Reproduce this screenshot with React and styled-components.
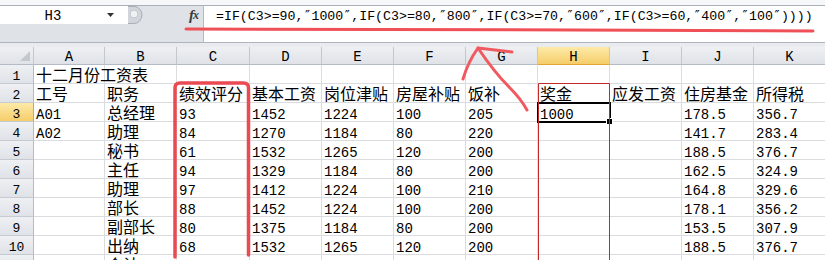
import React from "react";
import styled, { createGlobalStyle, css } from "styled-components";

const Global = createGlobalStyle`
  html, body { margin: 0; padding: 0; background: #fff; }
  body { overflow: hidden; }
`;

const MONO = `"Liberation Mono", "DejaVu Sans Mono", monospace`;
const CJK = `"Noto Sans CJK SC", "Noto Sans", sans-serif`;

const Page = styled.div`
  position: relative;
  width: 825px;
  height: 260px;
  overflow: hidden;
  background: #fff;
  font-family: ${MONO};
  color: #000;
`;

const TopStrip = styled.div`
  height: 5px;
  background: #f6f7f9;
  border-bottom: 1px solid #aab1bb;
`;

const FormulaRow = styled.div`
  display: flex;
  height: 36px;
`;

const LeftPanel = styled.div`
  width: 203px;
  background: #dfe2e7;
  display: flex;
  flex-direction: column;
`;

const NameRow = styled.div`
  height: 18px;
  display: flex;
  align-items: stretch;
`;

const NameBox = styled.div`
  width: 128px;
  background: #fff;
  display: flex;
  align-items: center;
`;

const NameText = styled.div`
  width: 106px;
  text-align: center;
  font-family: ${MONO};
  font-size: 14px;
  line-height: 16px;
  padding-top: 1px;
`;

const FxLabel = styled.div`
  flex: 1;
  display: flex;
  align-items: center;
  justify-content: flex-end;
  padding-right: 5px;
  font-family: "Liberation Serif", serif;
  font-style: italic;
  font-weight: bold;
  font-size: 15px;
  line-height: 16px;
  color: #3a3a3a;
  letter-spacing: -1px;
  & small { font-size: 12px; }
`;

const FormulaInput = styled.div`
  flex: 1;
  background: #fff;
  border-left: 1px solid #b4bac3;
  padding-left: 12px;
  font-family: ${MONO};
  font-size: 13.25px;
  line-height: 19px;
  white-space: nowrap;
  overflow: hidden;
`;

const Quote = styled.span`
  font-family: "DejaVu Sans Mono", monospace;
`;

const Divider = styled.div`
  height: 4px;
  border-top: 1px solid #aeb5bf;
  background: #e9ebee;
`;

const Sheet = styled.div`
  display: grid;
  grid-template-columns: 34px 71px 72px 73px repeat(8, 72px);
  grid-template-rows: 18px repeat(11, 19px);
`;

const headBg = css`
  background: linear-gradient(to bottom, #eef0f3, #dfe2e7);
`;
const selBg = css`
  background: linear-gradient(to bottom, #fdeaa8, #f5cd6a);
`;

const Corner = styled.div`
  ${headBg};
  border-right: 1px solid #c3c8cf;
  border-bottom: 1px solid #b5bbc4;
  box-sizing: border-box;
  display: flex;
  align-items: flex-end;
  justify-content: flex-end;
  padding: 0 3px 3px 0;
`;

const ColHead = styled.div`
  ${(p) => (p.$sel ? selBg : headBg)};
  border-right: 1px solid #c3c8cf;
  border-bottom: 1px solid ${(p) => (p.$sel ? "#e0a532" : "#b5bbc4")};
  box-sizing: border-box;
  display: flex;
  align-items: flex-end;
  justify-content: center;
  font-family: ${MONO};
  font-size: 14px;
  line-height: 11px;
  height: 18px;
  padding-bottom: 1px;
`;

const RowHead = styled.div`
  ${(p) => (p.$sel ? selBg : headBg)};
  border-right: 1px solid ${(p) => (p.$sel ? "#e0a532" : "#b5bbc4")};
  border-bottom: 1px solid #c6cbd2;
  box-sizing: border-box;
  display: flex;
  align-items: flex-end;
  justify-content: center;
  font-family: ${MONO};
  font-size: 13px;
  line-height: 11px;
  height: 19px;
  padding-bottom: 1px;
`;

const Cell = styled.div`
  border-right: 1px solid #dadcdf;
  border-bottom: 1px solid #dadcdf;
  box-sizing: border-box;
  height: 19px;
  padding-left: 2px;
  white-space: nowrap;
  display: flex;
  align-items: flex-end;
  ${(p) =>
    p.$num
      ? css`
          font-family: ${MONO};
          font-size: 14px;
          line-height: 10px;
          padding-bottom: 1px;
        `
      : css`
          font-family: ${CJK};
          font-size: 16px;
          line-height: 18px;
        `}
  ${(p) =>
    p.$active &&
    css`
      position: relative;
      z-index: 2;
      outline: 2px solid #000;
      outline-offset: -1px;
      &::after {
        content: "";
        position: absolute;
        right: -4px;
        bottom: -4px;
        width: 5px;
        height: 5px;
        background: #000;
        border: 1px solid #fff;
      }
    `}
`;

const Overlay = styled.svg`
  position: absolute;
  left: 0;
  top: 0;
  pointer-events: none;
  z-index: 5;
`;

const letters = ["A", "B", "C", "D", "E", "F", "G", "H", "I", "J", "K"];

const rows = [
  ["十二月份工资表", "", "", "", "", "", "", "", "", "", ""],
  ["工号", "职务", "绩效评分", "基本工资", "岗位津贴", "房屋补贴", "饭补", "奖金", "应发工资", "住房基金", "所得税"],
  ["A01", "总经理", "93", "1452", "1224", "100", "205", "1000", "", "178.5", "356.7"],
  ["A02", "助理", "84", "1270", "1184", "80", "220", "", "", "141.7", "283.4"],
  ["", "秘书", "61", "1532", "1265", "120", "200", "", "", "188.5", "376.7"],
  ["", "主任", "94", "1329", "1184", "80", "200", "", "", "162.5", "324.9"],
  ["", "助理", "97", "1412", "1224", "100", "210", "", "", "164.8", "329.6"],
  ["", "部长", "88", "1452", "1224", "100", "200", "", "", "178.1", "356.2"],
  ["", "副部长", "80", "1375", "1184", "80", "200", "", "", "153.5", "307.9"],
  ["", "出纳", "68", "1532", "1265", "120", "200", "", "", "188.5", "376.7"],
  ["", "会计", "", "", "", "", "", "", "", "", ""],
];

const isNum = (s) => /^[A-Za-z0-9.]*$/.test(s);

const FORMULA =
  "=IF(C3>=90,″1000″,IF(C3>=80,″800″,IF(C3>=70,″600″,IF(C3>=60,″400″,″100″))))";

const formulaParts = FORMULA.split(/(″)/).map((part, i) =>
  part === "″" ? <Quote key={i}>″</Quote> : <React.Fragment key={i}>{part}</React.Fragment>
);

export default function App() {
  return (
    <>
      <Global />
      <Page>
        <TopStrip />
        <FormulaRow>
          <LeftPanel>
            <NameRow>
              <NameBox>
                <NameText>H3</NameText>
                <svg width="10" height="6" viewBox="0 0 10 6">
                  <path d="M1 1 H8 L4.5 5 Z" fill="#333" />
                </svg>
              </NameBox>
              <svg width="16" height="18" viewBox="0 0 16 18">
                <path d="M0 0 H6 A8 9 0 0 1 6 18 H0 Z" fill="#d2d6dc" />
                <path d="M0 0.5 H6 A8 8.5 0 0 1 6 17.5 H0" fill="none" stroke="#a9b0b9" />
                <circle cx="6" cy="8" r="4" fill="#eef0f2" stroke="#c3c8ce" />
              </svg>
              <FxLabel>
                f<small>x</small>
              </FxLabel>
            </NameRow>
          </LeftPanel>
          <FormulaInput>{formulaParts}</FormulaInput>
        </FormulaRow>
        <Divider />
        <Sheet>
          <Corner>
            <svg width="10" height="10" viewBox="0 0 10 10">
              <path d="M10 0 V10 H0 Z" fill="#c3c8cf" />
            </svg>
          </Corner>
          {letters.map((l) => (
            <ColHead key={l} $sel={l === "H"}>
              {l}
            </ColHead>
          ))}
          {rows.map((r, ri) => (
            <React.Fragment key={ri}>
              <RowHead $sel={ri === 2}>{ri + 1}</RowHead>
              {r.map((v, ci) => (
                <Cell
                  key={ci}
                  $num={v !== "" && isNum(v)}
                  $active={ri === 2 && ci === 7}
                >
                  {v}
                </Cell>
              ))}
            </React.Fragment>
          ))}
        </Sheet>
        <Overlay width="825" height="260" viewBox="0 0 825 260">
          <path d="M538.5 262 V83.5 H609.5 V262" fill="none" stroke="#c42a2a" strokeWidth="1" />
          <path
            d="M186 29 C 400 29.5, 600 30, 813 31"
            fill="none"
            stroke="#ef5057"
            strokeWidth="3"
            strokeLinecap="round"
          />
          <path
            d="M175 257 L175 88 Q175 83 180 83 L243.5 83 Q248.5 83 248.5 88 L248.5 255"
            fill="none"
            stroke="#ea4a52"
            strokeWidth="3.5"
            strokeLinecap="round"
            strokeLinejoin="round"
          />
          <path
            d="M463 79 Q468 62 478 48 L512 52"
            fill="none"
            stroke="#ef5a60"
            strokeWidth="3"
            strokeLinecap="round"
            strokeLinejoin="round"
          />
          <path
            d="M478 48 Q494 72 510 88 Q521 99 527 110"
            fill="none"
            stroke="#ef5a60"
            strokeWidth="3"
            strokeLinecap="round"
          />
        </Overlay>
      </Page>
    </>
  );
}
